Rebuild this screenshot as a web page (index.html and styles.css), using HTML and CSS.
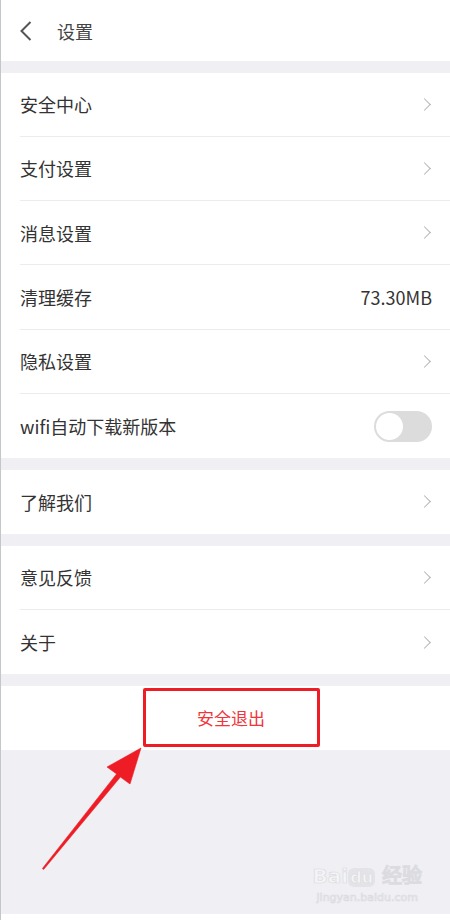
FILE: index.html
```html
<!DOCTYPE html>
<html lang="zh-CN">
<head>
  <meta charset="UTF-8" />
  <meta name="viewport" content="width=device-width, initial-scale=1.0"/>
  <title>设置</title>
  <link rel="stylesheet" href="styles.css">
</head>
<body>
  <div class="page">
    <header class="topbar">
      <svg class="back" width="14" height="22" viewBox="0 0 14 22">
        <path d="M11.5 2 L2.5 11 L11.5 20" fill="none" stroke="#555" stroke-width="2"/>
      </svg>
      <span class="title">设置</span>
    </header>

    <div class="gap"></div>
    <ul class="group">
      <li class="row"><span>安全中心</span><i class="arrow"></i></li>
      <li class="row"><span>支付设置</span><i class="arrow"></i></li>
      <li class="row"><span>消息设置</span><i class="arrow"></i></li>
      <li class="row"><span>清理缓存</span><span class="value">73.30MB</span></li>
      <li class="row"><span>隐私设置</span><i class="arrow"></i></li>
      <li class="row"><span>wifi自动下载新版本</span><span class="switch"></span></li>
    </ul>

    <div class="gap"></div>
    <ul class="group">
      <li class="row"><span>了解我们</span><i class="arrow"></i></li>
    </ul>

    <div class="gap"></div>
    <ul class="group">
      <li class="row"><span>意见反馈</span><i class="arrow"></i></li>
      <li class="row"><span>关于</span><i class="arrow"></i></li>
    </ul>

    <div class="gap"></div>
    <div class="logout">
      <span class="logout-btn">安全退出</span>
    </div>

    <div class="rest">
      <!-- annotation arrow pointing at the logout button -->
      <svg class="pointer" width="160" height="140" viewBox="0 0 160 140">
        <path d="M140 8 L129 44 L119.4 37.1 L42.6 129.5 L41.4 128.5 L115.6 33.9 L106 27 Z" fill="#ee1c25" stroke="#ee1c25" stroke-width="0.6" stroke-linejoin="round"/>
      </svg>
      <div class="mark">
        <div class="mark-top">Bai<b>du</b> 经验</div>
        <div class="mark-url">jingyan.baidu.com</div>
      </div>
    </div>
    <div class="foot"></div>
  </div>
</body>
</html>
```

FILE: styles.css
```css
body {
  margin: 0;
  font-family: "Noto Sans CJK SC", "Noto Sans", sans-serif;
  color: #333;
  background: #fff;
}
.page {
  width: 449px;
  border-left: 1px solid #c4c6cc;
}
.topbar {
  height: 61px;
  display: flex;
  align-items: center;
  padding-left: 18px;
}
.back {
  display: block;
}
.title {
  margin-left: 24px;
  font-size: 18px;
  color: #444;
}
.gap {
  height: 11.5px;
  background: #efeff4;
}
.group {
  list-style: none;
  margin: 0;
  padding: 0 0 0 19px;
}
.row {
  box-sizing: border-box;
  height: 64.3px;
  display: flex;
  align-items: center;
  justify-content: space-between;
  padding-right: 18px;
  font-size: 18px;
  border-bottom: 1px solid #ececee;
}
.row:last-child {
  border-bottom: none;
}
.arrow {
  width: 8px;
  height: 8px;
  border-top: 1.3px solid #b4b4b8;
  border-right: 1.3px solid #b4b4b8;
  transform: rotate(45deg);
  margin-right: 3px;
}
.value {
  font-size: 18px;
  color: #333;
}
.switch {
  width: 58px;
  height: 31px;
  border-radius: 16px;
  background: #dcdcdc;
  position: relative;
}
.switch::after {
  content: "";
  position: absolute;
  left: 2px;
  top: 2px;
  width: 27px;
  height: 27px;
  border-radius: 50%;
  background: #fff;
}
.logout {
  height: 64px;
  display: flex;
  justify-content: center;
  align-items: center;
}
.logout-btn {
  box-sizing: border-box;
  width: 177px;
  height: 59px;
  margin-left: 11px;
  border: 3px solid #ee1c25;
  border-radius: 2px;
  display: flex;
  align-items: center;
  justify-content: center;
  font-size: 17px;
  color: #f0353d;
}
.rest {
  height: 164px;
  background: #efeff4;
  position: relative;
}
.pointer {
  position: absolute;
  left: 0;
  top: -10px;
}
.mark {
  position: absolute;
  right: 28px;
  top: 114px;
  color: #f4f4f6;
  -webkit-text-stroke: 0.7px #dcdce0;
  font-family: "DejaVu Sans", sans-serif;
  text-align: center;
}
.mark-top {
  font-size: 20px;
  font-weight: bold;
  line-height: 24px;
}
.mark-top b {
  background: #e4e4e8;
  border-radius: 6px;
  padding: 0 2px;
  font-size: 16px;
}
.mark-url {
  font-size: 11px;
  line-height: 16px;
}
.foot {
  height: 7px;
}
```
